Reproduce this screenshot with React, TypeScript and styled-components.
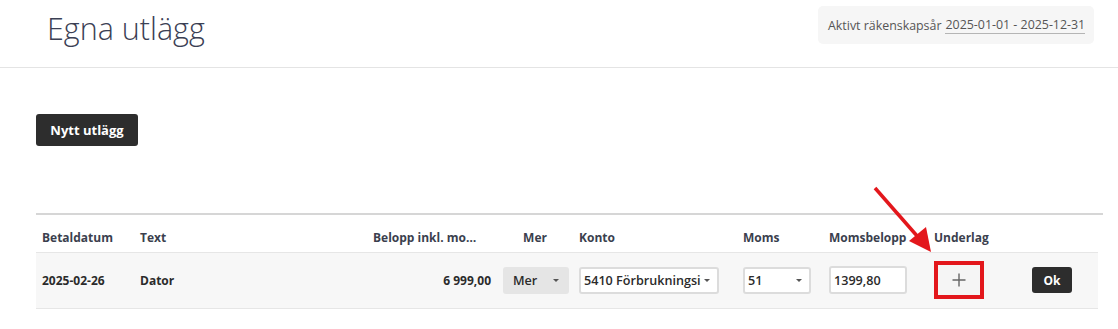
import styled, { createGlobalStyle } from "styled-components";

const GlobalStyle = createGlobalStyle`
  html, body {
    margin: 0;
    padding: 0;
    background: #ffffff;
    font-family: "Open Sans", "Liberation Sans", sans-serif;
    color: #2b2b2b;
  }
  * {
    box-sizing: border-box;
  }
`;

interface Column {
  key: string;
  label: string;
  width: number;
  align?: "left" | "center" | "right";
  truncate?: boolean;
}

const columns: Column[] = [
  { key: "date", label: "Betaldatum", width: 98 },
  { key: "text", label: "Text", width: 233 },
  { key: "amount", label: "Belopp inkl. moms", width: 130, truncate: true },
  { key: "more", label: "Mer", width: 76, align: "center" },
  { key: "account", label: "Konto", width: 164 },
  { key: "vat", label: "Moms", width: 86 },
  { key: "vatAmount", label: "Momsbelopp", width: 105 },
  { key: "attachment", label: "Underlag", width: 98 },
  { key: "ok", label: "", width: 72 },
];

export default function App() {
  return (
    <Page>
      <GlobalStyle />
      <TopBar>
        <Title>Egna utlägg</Title>
        <FiscalYear>
          Aktivt räkenskapsår <FiscalDates>2025-01-01 - 2025-12-31</FiscalDates>
        </FiscalYear>
      </TopBar>

      <Content>
        <PrimaryButton>Nytt utlägg</PrimaryButton>

        <TableWrap>
          <Table>
            <colgroup>
              {columns.map((c) => (
                <col key={c.key} style={{ width: c.width }} />
              ))}
            </colgroup>
            <thead>
              <tr>
                {columns.map((c) => (
                  <Th key={c.key} $align={c.align} $truncate={c.truncate}>
                    {c.truncate ? <Truncated>{c.label}</Truncated> : c.label}
                  </Th>
                ))}
              </tr>
            </thead>
            <tbody>
              <tr>
                <Td>2025-02-26</Td>
                <Td>Dator</Td>
                <Td $align="right">6 999,00</Td>
                <Td $align="center">
                  <SelectBox $variant="filled" $width={66}>
                    <SelectText>Mer</SelectText>
                    <Caret />
                  </SelectBox>
                </Td>
                <Td>
                  <SelectBox $variant="outlined" $width={140}>
                    <SelectText>5410 Förbrukningsinventarier</SelectText>
                    <Caret />
                  </SelectBox>
                </Td>
                <Td>
                  <SelectBox $variant="outlined" $width={68}>
                    <SelectText>51</SelectText>
                    <Caret />
                  </SelectBox>
                </Td>
                <Td>
                  <AmountInput defaultValue="1399,80" />
                </Td>
                <Td>
                  <AttachButton aria-label="Lägg till underlag">
                    <svg width="16" height="16" viewBox="0 0 16 16">
                      <path
                        d="M8 1.5v13M1.5 8h13"
                        stroke="#666"
                        strokeWidth="1.4"
                        fill="none"
                      />
                    </svg>
                  </AttachButton>
                </Td>
                <Td>
                  <OkButton>Ok</OkButton>
                </Td>
              </tr>
            </tbody>
          </Table>
        </TableWrap>
      </Content>

      <Arrow width="64" height="72" viewBox="0 0 64 72">
        <line x1="3" y1="3" x2="46" y2="52" stroke="#e3171c" strokeWidth="3.5" />
        <polygon points="59,67 37,56 54,42" fill="#e3171c" />
      </Arrow>
    </Page>
  );
}

const Page = styled.div`
  position: relative;
  width: 1118px;
  min-height: 329px;
`;

const TopBar = styled.header`
  display: flex;
  justify-content: space-between;
  align-items: flex-start;
  height: 68px;
  border-bottom: 1px solid #e4e4e4;
  padding: 0 24px 0 47px;
`;

const Title = styled.h1`
  margin: 0;
  padding-top: 8px;
  font-size: 30.5px;
  line-height: 40px;
  font-weight: 300;
  color: #3b4054;
`;

const FiscalYear = styled.div`
  display: flex;
  align-items: center;
  gap: 4px;
  margin-top: 6px;
  height: 38px;
  width: 276px;
  padding: 0 10px;
  background: #f6f6f6;
  border-radius: 5px;
  font-size: 12.4px;
  color: #555;
  white-space: nowrap;
`;

const FiscalDates = styled.span`
  border-bottom: 1px solid #b5b5b5;
  line-height: 16px;
`;

const Content = styled.main`
  padding: 46px 15px 0 36px;
`;

const PrimaryButton = styled.button`
  display: block;
  height: 32px;
  width: 102px;
  padding: 0;
  border: none;
  border-radius: 3px;
  background: #2d2d2d;
  color: #fff;
  font-family: inherit;
  font-size: 13px;
  font-weight: 700;
`;

const TableWrap = styled.div`
  margin-top: 67px;
  border-top: 2px solid #d6d6d6;
`;

const Table = styled.table`
  width: 1062px;
  table-layout: fixed;
  border-collapse: collapse;
`;

const Th = styled.th<{ $align?: string; $truncate?: boolean }>`
  height: 37px;
  padding: 0 ${({ $truncate }) => ($truncate ? "20px" : "6px")} 6px 6px;
  vertical-align: bottom;
  text-align: ${({ $align }) => $align || "left"};
  font-size: 12px;
  font-weight: 700;
  color: #3b3f4e;
  border-bottom: 1px solid #e6e6e6;
  white-space: nowrap;
`;

const Truncated = styled.span`
  display: block;
  overflow: hidden;
  text-overflow: ellipsis;
`;

const Td = styled.td<{ $align?: string }>`
  height: 56px;
  padding: 0 6px;
  background: #f7f7f7;
  border-bottom: 1px solid #e6e6e6;
  text-align: ${({ $align }) => $align || "left"};
  font-size: 12px;
  font-weight: 700;
  color: #2b2b2b;
  vertical-align: middle;
`;

const SelectBox = styled.div<{ $variant: "filled" | "outlined"; $width: number }>`
  display: inline-flex;
  align-items: center;
  vertical-align: middle;
  width: ${({ $width }) => $width}px;
  height: 27px;
  padding: ${({ $variant }) => ($variant === "filled" ? "0 10px" : "0 7px 0 3px")};
  border-radius: 3px;
  background: ${({ $variant }) => ($variant === "filled" ? "#e5e5e5" : "#fff")};
  border: ${({ $variant }) => ($variant === "filled" ? "none" : "2px solid #dcdcdc")};
  text-align: left;
  font-size: 12.6px;
  font-weight: 600;
  color: #2b2b2b;
`;

const SelectText = styled.span`
  flex: 1;
  overflow: hidden;
  white-space: nowrap;
`;

const Caret = styled.span`
  flex: none;
  margin-left: 3px;
  width: 0;
  height: 0;
  border-left: 3px solid transparent;
  border-right: 3px solid transparent;
  border-top: 3px solid #555;
`;

const AmountInput = styled.input`
  display: block;
  width: 78px;
  height: 28px;
  padding: 0 3px;
  border: 2px solid #dcdcdc;
  border-radius: 3px;
  background: #fff;
  font-family: inherit;
  font-size: 12.6px;
  font-weight: 600;
  color: #2b2b2b;
  outline: none;
`;

const AttachButton = styled.button`
  display: flex;
  align-items: center;
  justify-content: center;
  width: 50px;
  height: 38px;
  padding: 0;
  border: 4px solid #e3171c;
  background: #f5f5f5;
`;

const OkButton = styled.button`
  width: 40px;
  height: 26px;
  padding: 0;
  border: none;
  border-radius: 3px;
  background: #2d2d2d;
  color: #fff;
  font-family: inherit;
  font-size: 12px;
  font-weight: 700;
`;

const Arrow = styled.svg`
  position: absolute;
  left: 872px;
  top: 185px;
  pointer-events: none;
`;
